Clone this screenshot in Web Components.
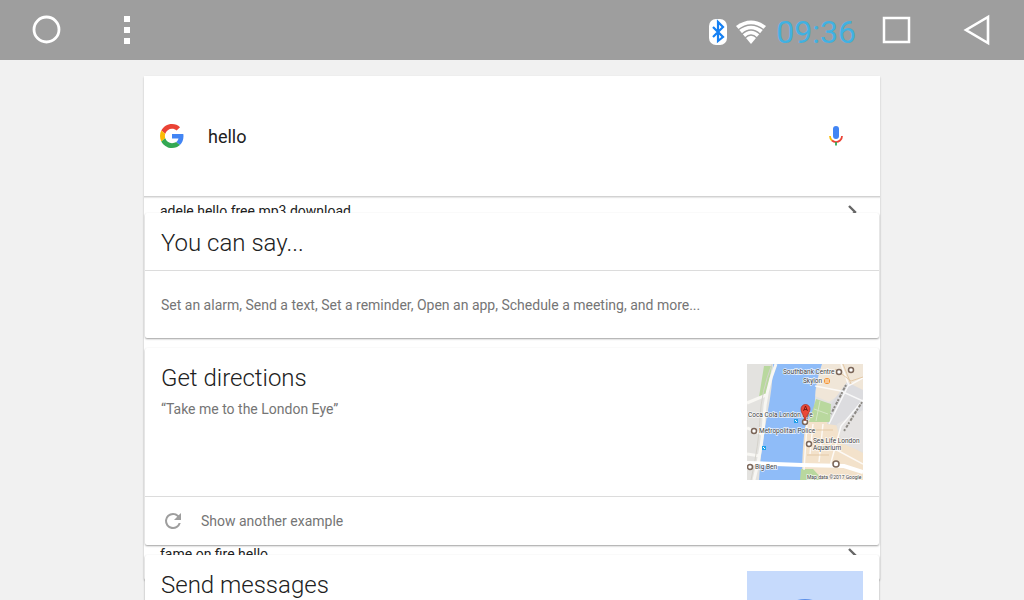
<!DOCTYPE html>
<html lang="en">
<head>
<meta charset="utf-8">
<meta name="viewport" content="width=device-width, initial-scale=1">
<title>Voice search</title>
<style>
  body { margin: 0; height: 100vh; overflow: hidden; background: #f1f1f1; color: #212121; font-family: Roboto, "Liberation Sans", sans-serif; font-size: 14px; }
</style>
</head>
<body>
<search-screen></search-screen>
<script>
  const define = (name, html) => customElements.define(name, class extends HTMLElement {
    constructor() {
      super();
      this.attachShadow({ mode: 'open' }).innerHTML = html;
    }
  });

  define('system-bar', `
    <style>
      :host { display: flex; align-items: center; justify-content: space-between; height: 60px; padding: 0 32px; background: #9e9e9e; box-sizing: border-box; }
      button { display: block; padding: 0; border: 0; background: none; }
      svg { display: block; }
      .left, .right, .status, .keys { display: flex; align-items: center; }
      .left { gap: 62px; }
      .right { gap: 26px; }
      .keys { gap: 50px; }
      .status { gap: 8px; }
      time { color: #41b1e1; font-size: 32px; line-height: 32px; padding: 4px 0 0 2px; }
      .status svg { padding-top: 4px; }
    </style>
    <div class="left">
      <button aria-label="Home"><svg width="30" height="30" viewBox="0 0 30 30"><circle cx="14.500" cy="14.500" r="12.500" fill="none" stroke="#fff" stroke-width="2.800"/></svg></button>
      <button aria-label="Menu"><svg width="6" height="30" viewBox="0 0 6 30"><path fill="#fff" d="M0 1h6v6H0zM0 12h6v6H0zM0 23h6v6H0z"/></svg></button>
    </div>
    <div class="right">
      <div class="status">
        <svg width="20" height="28" viewBox="0 0 20 28"><rect x="1" y="1" width="18" height="26" rx="7" fill="#fff"/><path d="M5 9l10 10-5 4V4l5 5L5 19" fill="none" stroke="#1580f3" stroke-width="2.200"/></svg>
        <svg width="30" height="24" viewBox="0 0 30 24"><path fill="#fff" d="M0 6Q15-5 30 6L15 24Z"/><path d="M2 10Q15 0 28 10M6 14Q15 6 24 14M9 18Q15 12 21 18" fill="none" stroke="#9e9e9e" stroke-width="1.300"/></svg>
        <time>09:36</time>
      </div>
      <div class="keys">
        <button aria-label="Recent apps"><svg width="30" height="30" viewBox="0 0 30 30"><rect x="2" y="3" width="25" height="24" fill="none" stroke="#fff" stroke-width="2.500"/></svg></button>
        <button aria-label="Back"><svg width="30" height="32" viewBox="0 0 30 32"><path d="M26 3v26L4 16Z" fill="none" stroke="#fff" stroke-width="2.600"/></svg></button>
      </div>
    </div>`);

  define('search-box', `
    <style>
      :host { display: flex; align-items: center; gap: 24px; height: 120px; padding: 0 32px 0 16px; background: #fff; border-bottom: 1px solid #d2d2d2; box-shadow: 0 1px 1px #e8e8e8; position: relative; z-index: 1; }
      svg { display: block; flex: none; }
      input { flex: 1; min-width: 0; border: 0; padding: 2px 0 0; outline: 0; background: none; font: 18px/24px Roboto, sans-serif; color: #212121; }
      button { border: 0; padding: 0; background: none; }
    </style>
    <svg width="24" height="24" viewBox="0 0 48 48" aria-label="Google">
      <path fill="#ea4335" d="M24 9.500c3.540 0 6.710 1.220 9.210 3.600l6.850-6.850C35.900 2.380 30.470 0 24 0 14.620 0 6.510 5.380 2.560 13.220l7.980 6.190C12.430 13.720 17.740 9.500 24 9.500z"/>
      <path fill="#4285f4" d="M46.980 24.550c0-1.570-.15-3.090-.38-4.550H24v9.020h12.940c-.58 2.960-2.260 5.480-4.780 7.180l7.730 6c4.510-4.180 7.090-10.360 7.090-17.650z"/>
      <path fill="#fbbc05" d="M10.530 28.590c-.48-1.450-.76-2.990-.76-4.590s.27-3.140.76-4.590l-7.980-6.190C.92 16.460 0 20.120 0 24c0 3.880.92 7.540 2.560 10.780l7.970-6.190z"/>
      <path fill="#34a853" d="M24 48c6.480 0 11.930-2.130 15.890-5.810l-7.730-6c-2.150 1.450-4.920 2.300-8.160 2.300-6.260 0-11.570-4.220-13.470-9.910l-7.980 6.190C6.510 42.620 14.620 48 24 48z"/>
    </svg>
    <input type="text" value="hello" aria-label="Search">
    <button aria-label="Voice search"><svg width="24" height="24" viewBox="0 0 24 24">
      <rect x="9" y="2" width="6" height="13" rx="3" fill="#4285f4"/>
      <path d="M6 12c0 2 .7 3.400 2 4.500" fill="none" stroke="#fbbc05" stroke-width="1.800"/>
      <path d="M8 16.500c2.300 2 5.700 2 8 0 1.300-1.100 2-2.500 2-4.500" fill="none" stroke="#ea4335" stroke-width="1.800"/>
      <path d="M12 18v3.500" stroke="#34a853" stroke-width="1.800"/>
    </svg></button>`);

  define('suggestion-row', `
    <style>
      :host { display: block; }
      a { display: flex; align-items: center; justify-content: space-between; height: 28px; padding: 0 16px; color: #212121; text-decoration: none; line-height: 20px; }
    </style>
    <a href="#"><slot></slot><svg width="24" height="24" viewBox="0 0 24 24"><path d="M9 7l6 6-6 6" fill="none" stroke="#666" stroke-width="2.400"/></svg></a>`);

  define('hint-card', `
    <style>
      :host { display: block; background: #fff; border-radius: 2px; box-shadow: 0 1px 2px rgba(0,0,0,.38); }
      .main { display: flex; justify-content: space-between; padding: 16px 16px var(--head-bottom, 16px); }
      ::slotted(h2) { margin: 0; font-size: 24px; line-height: 28px; font-weight: 300; }
      ::slotted(p) { margin: 0; color: #757575; line-height: 20px; padding-top: 7px; }
      ::slotted([slot=foot]) { border-top: 1px solid #dcdcdc; color: #757575; }
    </style>
    <div class="main"><div><slot></slot></div><slot name="picture"></slot></div>
    <slot name="foot"></slot>`);

  define('refresh-button', `
    <style>
      :host { display: block; }
      button { display: flex; align-items: center; gap: 16px; width: 100%; height: 48px; padding: 0 16px; border: 0; background: none; font: inherit; color: #757575; text-align: left; }
    </style>
    <button><svg width="24" height="24" viewBox="0 0 24 24"><path fill="#9e9e9e" d="M17.650 6.350A7.960 7.960 0 0 0 12 4a8 8 0 1 0 7.730 10h-2.080A6 6 0 1 1 12 6c1.660 0 3.140.69 4.220 1.780L13 11h7V4z"/></svg><slot></slot></button>`);

  define('london-map', `
    <style>
      :host, svg { display: block; }
      text { font: 6.5px Roboto, sans-serif; fill: #444; stroke: #fff; stroke-width: 1.5px; stroke-opacity: .8; paint-order: stroke; }
    </style>
    <svg width="116" height="116" viewBox="0 0 116 116">
      <rect width="116" height="116" fill="#e3e2df"/>
      <path d="M74 0h42v34L96 28 82 38 68 32Z" fill="#f0e6d8"/>
      <path d="M58 57h30l6 20 22 12v27H54Z" fill="#f3e2cb"/>
      <path d="M84 40l16-22 16 8v30L94 62 80 60Z" fill="#dcdcdf"/>
      <path d="M90 60l26-14v42l-20-8Z" fill="#e5e3e2"/>
      <path d="M26 0H75Q68 19 68 35T59 58Q55 80 55 116H12Q14 83 20 52T26 0Z" fill="#8fbcf8"/>
      <path d="M17 2h8l-6 31h-7ZM69 35l15 5-1 18-21 0ZM54 105h12l10 11H53Z" fill="#b9d89e"/>
      <path d="M67 45l14 5M73 37l-4 20" stroke="#d6e7c6"/>
      <path d="M29 0Q18 28 17 54T7 116M0 39l19-8M0 64l17 7M0 90l13 2" fill="none" stroke="#f8f7f3" stroke-width="3"/>
      <path d="M25 0Q14 28 13 54T4 116" fill="none" stroke="#d5d3cc"/>
      <path d="M0 99l55 2 42 1 19 6" fill="none" stroke="#fff" stroke-width="4"/>
      <path d="M116 36L94 62 83 102M82 60l19-38 15-8M68 22l26 5 22 10M94 0l8 22M86 84l30 16M60 60l-3 46M66 60l-3 30M76 60l-4 38" fill="none" stroke="#fff" stroke-width="1.500" opacity=".8"/>
      <path d="M96 0l8 20M58 66h28M60 91h22M88 5l16 12 12-4" fill="none" stroke="#e4c9a7"/>
      <path d="M99 21L84 50M115 38L97 67" fill="none" stroke="#77736c" stroke-width="2" stroke-dasharray="2 1 3 2" opacity=".8"/>
      <g fill="#fff" stroke="#7b6659" stroke-width="1.500">
        <circle cx="92" cy="8" r="2.500"/><circle cx="104" cy="6" r="2.500"/><circle cx="7" cy="67" r="2.500"/><circle cx="62" cy="80" r="2.500"/><circle cx="89" cy="100" r="3"/><circle cx="3" cy="103" r="2.500"/><circle cx="58" cy="58" r="2.500"/>
      </g>
      <circle cx="80" cy="17" r="3" fill="#f4912b"/>
      <path d="M79 15v4M81 15v4" stroke="#fff"/>
      <path d="M47 55h4v4h-4zM15 82h4v4h-4z" fill="#20a0e8"/><path d="M48 56l2 2M16 83l2 2" stroke="#fff"/>
      <text x="36" y="10">Southbank Centre</text>
      <text x="56" y="19">Skylon</text>
      <text x="1" y="53">Coca Cola London Eye</text>
      <text x="12" y="69">Metropolitan Police</text>
      <text x="66" y="79">Sea Life London</text>
      <text x="66" y="86">Aquarium</text>
      <text x="8" y="105">Big Ben</text>
      <text x="60" y="115" style="font-size:5px">Map data ©2017 Google</text>
      <path d="M58 57C57 51 54 49 54 45a4.500 4.500 0 0 1 9 0c0 4-4 6-5 12Z" fill="#ea4839" stroke="#a92b20" stroke-width=".7"/>
      <path d="M56.500 47l2-5 2 5M57 45.500h3" fill="none" stroke="#64130d" stroke-width=".8"/>
    </svg>`);

  define('message-picture', `
    <style>:host, svg { display: block; }</style>
    <svg width="116" height="116" viewBox="0 0 116 116"><rect width="116" height="116" fill="#c6dafc"/><circle cx="58" cy="58" r="30" fill="#5b8fe8"/></svg>`);

  define('search-screen', `
    <style>
      :host { display: block; }
      main { display: grid; padding: 16px 144px 0; }
      .panel, .cards { grid-area: 1 / 1; }
      .panel { align-self: start; background: #fff; border-radius: 2px; box-shadow: 0 1px 2px rgba(0,0,0,.28); padding-bottom: 12px; }
      .suggestions { display: grid; gap: 315px; }
      .cards { display: grid; align-content: start; padding: 137px 1px 0; gap: 10px; position: relative; z-index: 2; pointer-events: none; }
      hint-card { pointer-events: auto; }
      .compact { --head-bottom: 13px; }
      .examples { padding: 24px 16px 23px; line-height: 20px; }
    </style>
    <system-bar></system-bar>
    <main>
      <section class="panel">
        <search-box></search-box>
        <div class="suggestions">
          <suggestion-row>adele hello free mp3 download</suggestion-row>
          <suggestion-row>fame on fire hello</suggestion-row>
        </div>
      </section>
      <section class="cards">
        <hint-card class="compact">
          <h2>You can say...</h2>
          <div slot="foot" class="examples">Set an alarm, Send a text, Set a reminder, Open an app, Schedule a meeting, and more...</div>
        </hint-card>
        <hint-card>
          <h2>Get directions</h2>
          <p>“Take me to the London Eye”</p>
          <london-map slot="picture"></london-map>
          <refresh-button slot="foot">Show another example</refresh-button>
        </hint-card>
        <hint-card>
          <h2>Send messages</h2>
          <message-picture slot="picture"></message-picture>
        </hint-card>
      </section>
    </main>`);
</script>
</body>
</html>
